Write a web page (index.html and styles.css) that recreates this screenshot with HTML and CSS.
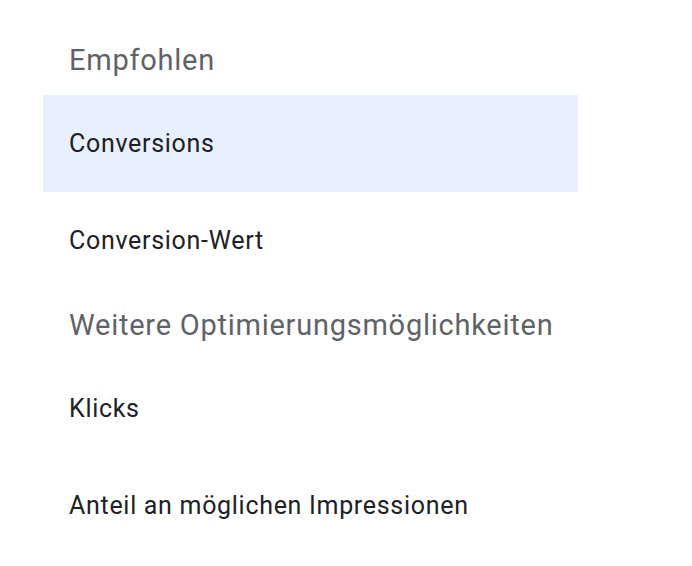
FILE: index.html
```html
<!DOCTYPE html>
<html lang="de">
<head>
  <meta charset="UTF-8">
  <meta name="viewport" content="width=device-width, initial-scale=1">
  <title>Zielvorhaben</title>
  <link rel="stylesheet" href="styles.css">
</head>
<body>

<div class="menu">
  <div class="group-title">Empfohlen</div>
  <div class="option selected">Conversions</div>
  <div class="option">Conversion-Wert</div>

  <div class="group-title">Weitere Optimierungsmöglichkeiten</div>
  <div class="option">Klicks</div>
  <div class="option">Anteil an möglichen Impressionen</div>
</div>

</body>
</html>
```

FILE: styles.css
```css
body {
  font-family: Roboto, 'Liberation Sans', Arial, sans-serif;
  margin: 0;
  padding: 0;
  background: #ffffff;
}
.menu {
  width: 535px;
  margin-left: 43px;
  padding-top: 24px;
}
.group-title {
  height: 71px;
  box-sizing: border-box;
  padding: 16px 0 0 26px;
  font-size: 29px;
  line-height: 40px;
  letter-spacing: 0.75px;
  color: #5f6368;
}
.option {
  height: 97px;
  display: flex;
  align-items: center;
  padding-left: 26px;
  font-size: 25px;
  letter-spacing: 0.7px;
  color: #202124;
}
.option.selected {
  background: #e8f0fe;
}
```
